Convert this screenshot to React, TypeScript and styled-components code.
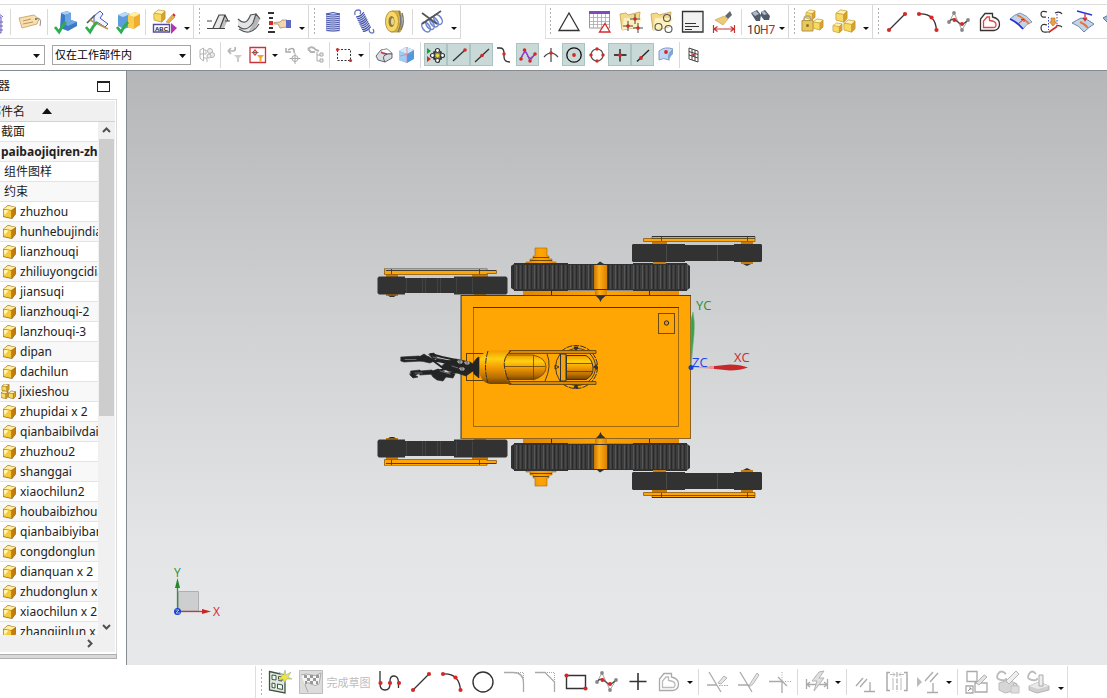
import React from "react";
import styled, { createGlobalStyle, css } from "styled-components";

const Global = createGlobalStyle`
  * { box-sizing: border-box; }
  body { margin: 0; background: #fff; color: #222; font-family: "Noto Sans", "Noto Sans CJK SC", sans-serif; font-size: 12px; overflow: hidden; }
  button, select { font: inherit; color: inherit; }
`;

const Shell = styled.div`
  display: flex;
  flex-direction: column;
  height: 100vh;
  overflow: hidden;
`;

const ToolbarRow = styled.header`
  display: flex;
  flex: none;
  height: 35px;
  margin-top: 4px;
  border-top: 1px solid #dcdcdc;
  overflow: hidden;
`;

const Group = styled.div<{ $gapBefore?: boolean }>`
  display: flex;
  flex: none;
  align-items: center;
  border-right: 1px solid #d8d8d8;
  border-bottom: 1px solid #dcdcdc;
  ${(p) => p.$gapBefore && css`margin-left: 84px; box-shadow: inset 1px 0 #e2e2e2;`}
`;

const Grip = styled.span`
  flex: none;
  width: 8px;
  height: 27px;
  padding: 0 2px;
  background: repeating-linear-gradient(#b0b0b0 0 2px, transparent 2px 4px) content-box 3px 0 / 3px 100% no-repeat;
`;

const Sep = styled.span<{ $tight?: boolean }>`
  flex: none;
  width: 1px;
  height: 26px;
  margin: 0 ${(p) => (p.$tight ? "2px" : "3px")} 0 2px;
  background: #d9d9d9;
`;

const ToolButton = styled.button<{ $clipped?: boolean; $wide?: boolean }>`
  display: flex;
  flex: none;
  align-items: center;
  justify-content: ${(p) => (p.$clipped ? "flex-end" : "center")};
  gap: 4px;
  width: ${(p) => (p.$clipped ? "8px" : p.$wide ? "79px" : "31px")};
  height: 31px;
  padding: ${(p) => (p.$clipped ? "0 4px 0 0" : "0")};
  border: 0;
  background: none;
  color: #bdbdbd;
  font-size: 11px;
  white-space: nowrap;
  svg { flex: none; overflow: visible; }
`;

const CaretButton = styled.button<{ $low?: boolean }>`
  flex: none;
  width: ${(p) => (p.$low ? "13px" : "12px")};
  height: 24px;
  padding: ${(p) => (p.$low ? "12px 0 0" : "0")};
  border: 0;
  background: none;
  line-height: 0;
`;

const OptionsRow = styled.div`
  display: flex;
  flex: none;
  align-items: center;
  height: 32px;
  border-bottom: 1px solid #858b90;
`;

const SelectBox = styled.label<{ $short?: boolean }>`
  position: relative;
  flex: none;
  display: flex;
  width: ${(p) => (p.$short ? "45px" : "139px")};
  height: 20px;
  margin-right: ${(p) => (p.$short ? "7px" : "4px")};
  svg { position: absolute; right: 5px; top: 9px; pointer-events: none; }
`;

const Select = styled.select<{ $short?: boolean }>`
  width: 100%;
  height: 20px;
  padding: 0 2px;
  border: 1px solid #a5a5a5;
  ${(p) => p.$short && "border-left: 0;"}
  border-radius: 0;
  appearance: none;
  background: #fff;
  color: #000;
  font-size: 11px;
`;

const SnapButton = styled.button<{ $on?: boolean }>`
  display: flex;
  flex: none;
  align-items: center;
  justify-content: center;
  width: 23px;
  height: 23px;
  padding: 0;
  border: 1px solid ${(p) => (p.$on ? "#a9c5c1" : "transparent")};
  background: ${(p) => (p.$on ? "#c8d9d7" : "transparent")};
`;

const Main = styled.div`
  display: flex;
  flex: 1;
  min-height: 0;
`;

const Navigator = styled.aside`
  display: flex;
  flex: none;
  flex-direction: column;
  width: 127px;
  padding: 0 9px 6px 0;
  border-right: 1px solid #858b90;
  overflow: hidden;
`;

const NavTitle = styled.div`
  display: flex;
  flex: none;
  align-items: center;
  justify-content: space-between;
  height: 28px;
  padding-right: 7px;
  span { margin-left: -2px; }
`;

const MaxButton = styled.button`
  width: 13px;
  height: 11px;
  margin-top: 3px;
  padding: 0;
  border: 1px solid #222;
  border-top-width: 2px;
  background: none;
`;

const TreeFrame = styled.div`
  display: flex;
  flex: 1;
  flex-direction: column;
  min-height: 0;
  border: solid #d9d9d9;
  border-width: 1px 1px 0 0;
  padding: 1px 1px 2px 0;
`;

const ColumnHeader = styled.button`
  display: flex;
  flex: none;
  align-items: center;
  gap: 17px;
  height: 21px;
  padding: 0;
  border: 0;
  border-bottom: 1px solid #d2d2d2;
  background: #f0f0f0;
  white-space: nowrap;
  span { margin-left: -11px; }
`;

const TreeBody = styled.div`
  display: flex;
  flex: 1;
  min-height: 0;
`;

const TreeList = styled.ul`
  flex: 1;
  min-width: 0;
  margin: 0;
  padding: 0;
  list-style: none;
  overflow: hidden;
`;

const TreeItem = styled.li<{ $kind: string }>`
  display: flex;
  align-items: center;
  gap: ${(p) => (p.$kind === "assembly" ? "3px" : "4px")};
  height: 20px;
  padding-left: ${(p) => ({ part: "3px", indent: "4px" }[p.$kind] || "1px")};
  border-bottom: 1px solid #e4e4e4;
  font-weight: ${(p) => (p.$kind === "root" ? 700 : 400)};
  line-height: 19px;
  white-space: nowrap;
  &:nth-child(even) { background: #f8f8f8; }
  svg { flex: none; }
`;

const VScroll = styled.div`
  display: flex;
  flex: none;
  flex-direction: column;
  align-items: center;
  width: 17px;
  background: #f0f0f0;
`;

const ScrollArrow = styled.button`
  flex: none;
  width: 16px;
  height: 17px;
  padding: 0;
  border: 0;
  background: none;
  line-height: 0;
`;

const Thumb = styled.div`
  width: 15px;
  height: 54%;
  margin-bottom: auto;
  background: #cdcdcd;
`;

const HScroll = styled.div`
  display: flex;
  flex: none;
  align-items: center;
  justify-content: flex-end;
  height: 17px;
  padding-right: 18px;
  background: #f0f0f0;
`;

const Splitter = styled.div`
  flex: none;
  height: 5px;
  border: 1px solid #b0b0b0;
  border-left: 0;
  background: #d9d9d9;
`;

const Viewport = styled.main`
  position: relative;
  flex: 1;
  min-width: 0;
  background: linear-gradient(#b5b6b8, #d0d1d3 42%, #e4e5e7 80%, #e7e8ea);
`;

const Scene = styled.svg`
  display: block;
  width: 100%;
  height: 100%;
`;

const Triad = styled.svg`
  position: absolute;
  left: 41px;
  bottom: 42px;
`;

const BottomRow = styled.footer`
  display: flex;
  flex: none;
  height: 33px;
  padding: 1px 0 0 255px;
  background: #fff;
`;

const BottomGroup = styled.div`
  display: flex;
  align-items: center;
  border: solid #dedede;
  border-width: 0 1px 0 1px;
`;

const Caret = () => (
  <svg width="7" height="4"><path d="M0 0H7L3.5 4Z" fill="#111" /></svg>
);

const Dot = ({ x, y, r = 2.1, c = "#d32a28" }: { x: number; y: number; r?: number; c?: string }) => (
  <circle cx={x} cy={y} r={r} fill={c} stroke="none" />
);

const K = "#333";
const G = "#b4b4b4";
const R = "#d32a28";

const check = <path d="M1 17 5 22Q8 16 12 12" fill="none" stroke="#2fae4b" strokeWidth="2.8" />;

const cube = (x: number, y: number, s: number, id: string, edge = "#c09a3a") => (
  <g key={id} transform={`translate(${x} ${y}) scale(${s})`} stroke={edge} strokeWidth=".5" strokeLinejoin="round">
    <path d="M0 3 4 0 10 1 10 8 7 11 0 9Z" fill="#f2b829" />
    <path d="M0 3 4 0 10 1 7 4Z" fill="#fff3b4" />
    <path d="M0 3 7 4 7 11 0 9Z" fill="#f8d963" />
    <path d="M7 4 10 1 10 8 7 11Z" fill="#d9a02c" />
  </g>
);

const lineIcon = <><path d="M4 20 20 4" stroke={K} strokeWidth="1.3" /><Dot x={4} y={20} /><Dot x={20} y={4} /></>;
const arcIcon = <><path d="M3 4Q19 3 20.5 20" fill="none" stroke={K} strokeWidth="1.3" /><Dot x={3} y={4} /><Dot x={15.5} y={7.5} /><Dot x={20.5} y={20} /></>;
const splineIcon = (
  <>
    <path d="M2 12 7 3 15 20 21 10" fill="none" stroke="#999" strokeWidth=".9" />
    <path d="M2 12C5 8 7 9 9 10.5S14 15 16 14 20 11 21 10" fill="none" stroke="#444" strokeWidth="1.2" />
    <Dot x={2} y={12} c="#888" r={1.9} /><Dot x={7} y={3} c="#888" r={1.9} /><Dot x={15} y={20} c="#888" r={1.9} /><Dot x={21} y={10} c="#888" r={1.9} />
    <Dot x={7.500} y={10} /><Dot x={15} y={14} />
  </>
);
const offsetShape = (outer: string, inner: string) => (
  <g fill="none" strokeWidth="1.3">
    <path d="M2.500 20.500V9L7 3.500H14.500V7Q21.500 8.500 21.500 14T16 20.500Z" stroke={outer} />
    <path d="M5.500 17.500V11L9 7H11.500V10.500Q18 11 18 14.500T15 17.500Z" stroke={inner} />
  </g>
);

const art: Record<string, React.ReactNode> = {
  notes: <><path d="M4 7H21V23H4Z" fill="#eceaff" stroke="#6b5fc0" /><path d="M18 3 23 7M7 12H23M7 16H23M7 20H23" stroke="#6b5fc0" /></>,
  tag: <><path d="M1 8 16 5 21 9 19 14 4 18Z" fill="#f6dfb0" stroke="#c99a55" strokeWidth=".8" /><path d="M5 11 13 9M5 14 15 12" stroke="#b58c54" strokeWidth=".9" /><circle cx="18" cy="9" r="1" fill="#7a5a30" /><path d="M18 9Q24 6 22 16" fill="none" stroke="#888" /></>,
  blockCheck: <><path d="M7 3 13 1 17 3V10L23 12V16L14 21 6 18Z" fill="#3d79c9" /><path d="M7 3 13 1 17 3 11 5Z" fill="#a8cdf4" /><path d="M11 5 17 3V10L23 12 14 16 11 14Z" fill="#6ea6e4" />{check}</>,
  sketchCheck: <><path d="M9 6 15 1 18 4 15 8 23 14 20 17 12 12 9 14Z" fill="#f2f5ff" stroke="#3d56c5" /><path d="M2 13 10 5" fill="none" stroke="#555" strokeWidth="1.6" /><path d="M5 10 23 19" stroke="#b99a58" strokeWidth="1.8" />{check}</>,
  boxCheck: <><path d="M2 5 9 2 14 4V17L8 19 2 16Z" fill="#5e9ddd" /><path d="M2 5 9 2 14 4 7 7Z" fill="#b9daf7" /><path d="M12 5 19 2 24 4V15L18 19 12 17Z" fill="#f0ad32" /><path d="M12 5 19 2 24 4 18 7Z" fill="#fff0a3" /><path d="M12 5 18 7V19L12 17Z" fill="#f9cd50" />{check}</>,
  abc: <>{cube(1, 0, 1.1, "a")}<path d="M13 12 19 5 22 7 16 13Z" fill="#e8b43d" stroke="#a98" strokeWidth=".7" /><path d="M20 4 22 6" stroke={R} strokeWidth="2" /><path d="M.500 14.500H16.500V22H.500Z" fill="#fff" stroke="#5749a2" strokeWidth="1.4" /><text x="2" y="21" fontSize="6" fontWeight="700" fontFamily="Liberation Sans" fill="#222">ABC</text><path d="M18 13 24 18 18 24Z" fill="#b138ad" /></>,
  slot: <><path d="M7 18 13 5H19L14 18Z" fill="#e6e7e8" /><path d="M14 18 19 5 21 12 18 18Z" fill="#bfc1c3" /><path d="M1 11H6M19 11H24M1 18.500H19M7 18 13 5H19L14 18M19 5 22 11" fill="none" stroke="#444" strokeWidth="1.200" /></>,
  groove: <><path d="M1 9Q9 17 14 5L19 4Q16 20 10 21 4 21 1 16Z" fill="#e3e4e5" /><path d="M19 4 23 9Q19 20 11 22 17 15 19 4Z" fill="#b5b7b9" /><path d="M1 9Q9 17 13.500 5L19 4 23 9M1 16Q9 23 16 13L19 4M2 19Q14 27 22 14" fill="none" stroke="#555" strokeWidth="1.200" /></>,
  feature: <><path d="M0 3H6M1 8H5M1 18H5M0 22H7" stroke={K} strokeWidth="1.8" /><path d="M1 11H5V15H1Z" fill={R} /><path d="M6 12.500 12 12 14 10H19V17L12 18 10 14H6Z" fill="#f0d5ae" stroke="#a98f70" strokeWidth=".8" /><path d="M18 10H23V18H18Z" fill="#5f68c0" /></>,
  spring: <><rect x="5" y="3" width="14" height="19" rx="2" fill="#dfe2f6" />{[3, 5, 7, 9, 11, 13, 15, 17, 19].map((y) => <path key={y} d={`M5 ${y + 1}Q12 ${y + 3} 19 ${y + 1}`} fill="none" stroke="#4553a8" strokeWidth="1.1" />)}<path d="M5 4Q12 1 19 4" fill="none" stroke="#4553a8" /></>,
  extSpring: <><g transform="rotate(-25 12 12)"><rect x="7" y="4" width="9" height="16" fill="#d7dbf3" />{[4, 6, 8, 10, 12, 14, 16, 18, 20].map((y) => <path key={y} d={`M7 ${y}Q11 ${y + 2} 16 ${y - 1}`} fill="none" stroke="#4452a3" strokeWidth="1.1" />)}</g><path d="M3 5Q2 0 6 0T8 4M17 19Q17 23 20 23T21 19" fill="none" stroke="#6874bd" strokeWidth="1.3" /></>,
  spool: <><path d="M9 1H17Q21 12 17 22H8Z" fill="#ddb43d" stroke="#a98b2c" strokeWidth=".8" /><path d="M16 1Q20 12 15 22M19 3Q22 12 18 20" fill="none" stroke="#777" strokeWidth="1.4" /><ellipse cx="9" cy="11.500" rx="6.500" ry="10.500" fill="#f7d766" stroke="#b59634" /><ellipse cx="8.500" cy="11.500" rx="3" ry="5.500" fill="#8f7c45" /><ellipse cx="9.500" cy="11.500" rx="1.500" ry="3.500" fill="#e9d58c" /></>,
  springCut: <><g fill="none" stroke="#6c84d0" strokeWidth="1.500"><ellipse cx="6" cy="17" rx="3.500" ry="5.500" transform="rotate(-35 6 17)" /><ellipse cx="10" cy="14.500" rx="3.500" ry="5.500" transform="rotate(-35 10 14.500)" /><ellipse cx="14" cy="12" rx="3.500" ry="5.500" transform="rotate(-35 14 12)" /><ellipse cx="18" cy="9.500" rx="3.500" ry="5.500" transform="rotate(-35 18 9.500)" /></g><path d="M2 3 17 14M21 1 2 14" stroke="#555" strokeWidth="1.700" /></>,
  triangle: <path d="M12 3 22 20.500H2Z" fill="none" stroke={K} strokeWidth="1.3" />,
  tableTri: <><path d="M1.500 2H21.500V18H1.500Z" fill="#fff" stroke="#999" /><path d="M1 1H22V4H1Z" fill="#7c4bc4" /><path d="M2 7.500H21M2 11.500H21M2 14.500H21M5.500 4V18M9.500 4V18M13.500 4V18M17.500 4V18" stroke="#aaa" strokeWidth=".8" /><path d="M17 13.500 22 22H11.500Z" fill="#fff" stroke={R} strokeWidth="1.300" /></>,
  folderPts: <><path d="M1 4 7 3 9 5 21 2 19 17 3 20Z" fill="#f4d98a" stroke="#cfae60" /><path d="M5 8H23L19 17 3 20Z" fill="#fbf0be" /><path d="M16 4V14M11 9H21M9 11V21M4 16H14M19 13V23M14 18H24" stroke={K} strokeWidth=".9" /><Dot x={16} y={9} r={1.800} /><Dot x={9} y={16} r={1.800} /><Dot x={19} y={18} r={1.800} /></>,
  folderCircles: <><path d="M1 4 7 3 9 5 21 2 19 17 3 20Z" fill="#f4d98a" stroke="#cfae60" /><path d="M5 8H23L19 17 3 20Z" fill="#fbf0be" /><g fill="none" stroke="#555" strokeWidth="1.1"><circle cx="17" cy="8" r="3.500" /><circle cx="8.500" cy="17" r="3.500" /><circle cx="18.500" cy="19" r="3.500" /></g></>,
  terminal: <><path d="M1.500 1.500H22V22H1.500Z" fill="#f1f1f1" stroke={K} strokeWidth="1.300" /><path d="M4 13.500H15M4 16.500H18M4 19.500H11" stroke={K} strokeWidth="1.2" /></>,
  brush: <><path d="M13 6 18 1 20 5 16 9Z" fill="#606873" /><path d="M3 10 12 6 16 9 11 15Z" fill="#eccb77" stroke="#c5a460" strokeWidth=".7" /><path d="M1.500 15V23M22.500 15V23M2 19H22M5.500 16.500 2 19 5.500 21.500M18.500 16.500 22 19 18.500 21.500" fill="none" stroke="#c83336" strokeWidth="1.2" /></>,
  find: <><path d="M3 3 9 0 13 5 12 11 8 11ZM13 2 17 0 22 6 21 10 16 10 13 6Z" fill="#4f5a6c" /><path d="M4 3 8 1 11 4 7 6ZM13 2 16 1 19 4 16 5Z" fill="#aeb8c8" /><text x="-1" y="24" fontSize="12" fontFamily="Roboto" fill="#333">10</text><text x="12" y="24" fontSize="12" fontFamily="Roboto" fill="#a62e2e">H7</text></>,
  lockCubes: <>{cube(5, 0, 0.9, "a")}{cube(12, 9, 1, "b")}<path d="M1 10.500H12V21H1Z" fill="#e9c85a" stroke="#b39344" /><path d="M3 10.500Q3 6 6.500 6T10 10.500" fill="none" stroke="#b8ac80" strokeWidth="1.800" /><Dot x={6.500} y={15.500} c="#8d702b" r={1.500} /></>,
  cubes: <>{cube(4, 0, 1.1, "a")}{cube(12, 10, 1.1, "b")}{cube(1, 13, 0.9, "c")}</>,
  line: lineIcon,
  arc: arcIcon,
  spline: splineIcon,
  offset: offsetShape(K, "#e04848"),
  surface1: <><path d="M1 9Q6 4 11 3 18 5 23 12 18 13 14 19 8 12 1 9Z" fill="#c1d4ea" stroke="#6c84a8" strokeWidth=".8" /><path d="M1 9Q8 12 14 19" fill="none" stroke="#2434d9" strokeWidth="1.900" /><path d="M8 5Q15 8 20 14" fill="none" stroke="#e87636" strokeWidth="1.900" /><path d="M9 14 15 9M12 9.500H15V12" fill="none" stroke={R} /></>,
  project: <><path d="M7 2Q1 0 1 4T6 7M7 15Q1 13 1 18T7 22H10M16 16Q20 15 22 17M15 3Q20 1 22 4" fill="none" stroke={K} strokeWidth="1.200" /><path d="M9 22 17 16.500" stroke={R} strokeWidth="1.6" /><path d="M8.500 7V20M17 4V16" stroke="#3542df" strokeDasharray="1.500 1.500" /><path d="M11 8H15V12H16.500L13 16 9.500 12H11Z" fill="#eda146" stroke="#ad6b25" strokeWidth=".6" /></>,
  surface2: <><path d="M1 13Q6 10 10 8 17 9 23 14 18 17 13 22 8 15 1 13Z" fill="#c1d4ea" stroke="#6c84a8" /><path d="M6 1 21 5" stroke="#2636e1" strokeWidth="1.500" /><path d="M9 12Q14 14 17 18" fill="none" stroke="#e87636" strokeWidth="1.900" /><path d="M14 3.500V10M12 7.500 14 10.500 16 7.500" fill="none" stroke={R} strokeWidth="1.300" /></>,
  surface3: <path d="M1 8 10 3 23 12 12 19Z" fill="#9fb8dc" stroke="#667a9b" />,
  sketchNew: <><path d="M1.500 1.500 17 5V23L1.500 20Z" fill="#e0ebdd" stroke="#405445" strokeWidth="1.300" /><path d="M4 5 8 5.500V10L4 9.500ZM10.500 6.500 14 7V11L10.500 10.500ZM4 13 7 13.500V18L4 17.500ZM9.500 14 14.500 15V19.500L9.500 18.500Z" fill="#f5faf4" stroke="#405445" /><path d="M17 0 18 5 23 2 20 7 24 9 18.500 9 17 13 15 9 10 10 14 6 11 2 15.500 5Z" fill="#f4e33f" stroke="#8ab0c0" strokeWidth=".6" /></>,
  flag: <><path d="M.5.500H23.500V23.500H.500Z" fill="#dcdcdc" stroke="#bdbdbd" /><path d="M2 5Q8 3 12 5T22 3L20 14Q16 17 12 14T6 15L9 22" fill="#f6f6f6" stroke="#aaa" /><path d="M5 5H8V8H5ZM11 5H14V8H11ZM17 5H20V8H17ZM8 8H11V11H8ZM14 8H17V11H14ZM6 11H8V14H6ZM11 11H14V14H11ZM17 11H19V14H17Z" fill="#999" /></>,
  profile: <><path d="M2 1V14Q2 20 7 20T12 14V11Q12 6 16 6T20.500 12V18" fill="none" stroke={K} strokeWidth="1.300" /><Dot x={2.500} y={13} /><Dot x={12} y={13} /><Dot x={21} y={13} /></>,
  circle: <circle cx="12" cy="12" r="10" fill="none" stroke={K} strokeWidth="1.400" />,
  fillet: <><path d="M2 2.500H11Q21.500 2.500 21.500 13V22" fill="none" stroke="#aaa" strokeWidth="1.300" /><path d="M12 2.500H21.500V12" fill="none" stroke="#aaa" strokeDasharray="1 1" /></>,
  chamfer: <><path d="M2 2.500H12L21.500 12V22" fill="none" stroke="#aaa" strokeWidth="1.300" /><path d="M12 2.500H21.500V12" fill="none" stroke="#aaa" strokeDasharray="1 1" /></>,
  rect: <><path d="M2.500 5.500H21.500V18.500H2.500Z" fill="none" stroke={K} strokeWidth="1.400" /><Dot x={2.500} y={5.500} /><Dot x={21.500} y={18.500} /></>,
  plus: <path d="M12 3V20M3.500 11.500H20.500" stroke={K} strokeWidth="1.600" />,
  offsetGray: offsetShape("#aaa", "#bbb"),
  trim: <><path d="M3 2 15 22M1 15H11" stroke="#aaa" strokeWidth="1.300" /><path d="M13 15.500H22" stroke="#aaa" strokeDasharray="1.500 1" /><path d="M12 13 18 6 21 8 15 14Z" fill="#e6e6e6" stroke={G} /></>,
  extend: <><path d="M3 2 15 22M1 15H12" fill="none" stroke="#aaa" strokeWidth="1.300" /><path d="M13 14 20 3 22 5 16 14 12 17Z" fill="#e6e6e6" stroke={G} /></>,
  corner: <><path d="M1 11.500H14V23M10 7 19 16" fill="none" stroke="#aaa" strokeWidth="1.300" /><path d="M14 2V11.500H23" fill="none" stroke="#aaa" strokeDasharray="1 1.500" /></>,
  autoDim: <><path d="M1.500 9V19M22.500 9V19M2 14.500H22M5 12 2 14.500 5 17M19 12 22 14.500 19 17" fill="none" stroke="#aaa" strokeWidth="1.300" /><path d="M14 2 7 11H12L9 21 19 8H14L19 1Z" fill="#e0e0e0" stroke="#b4b4b4" /></>,
  constraint: <><path d="M2 16 9 8M6 17 13 9M16 12V21M10 21.500H21" stroke="#aaa" strokeWidth="1.300" /></>,
  symmetric: <><path d="M5 2.500H2V20.500H5M19 2.500H22V20.500H19" fill="none" stroke="#aaa" strokeWidth="1.500" /><path d="M12 2V22" stroke="#999" strokeDasharray="5 1.500" /><path d="M5 4.500H10M19 4.500H14M8 2.500 10 4.500 8 6.500M16 2.500 14 4.500 16 6.500M8 8V20M16 8V20" fill="none" stroke="#bbb" /></>,
  showCons: <><path d="M1 7 6 12 1 17Z" fill="#bbb" /><path d="M9 11 17 2M14 12 22 3M17 13V23M11 22.500H22" stroke="#aaa" strokeWidth="1.300" /></>,
  refSketch: <><path d="M2 1.500H12V11.500H2ZM10 13H22V22H10ZM1 16H8V23H1Z" fill="#fff" stroke="#aaa" strokeWidth="1.300" /><path d="M3 21 6 18M4 18H6V20" fill="none" stroke="#999" /><path d="M11 13 19 5 22 7 14 15Z" fill="#e2e2e2" stroke={G} /></>,
  editFeat: <><path d="M10 4Q5-1 2 4T5 10 10 8" fill="none" stroke="#bbb" strokeWidth="1.800" /><path d="M3 13 13 10 21 14V20L9 23 3 20Z" fill="#d6d6d6" stroke="#bbb" /><path d="M10 11 20 1 23 4 13 14Z" fill="#eee" stroke={G} /><path d="M15 16H23V23H15Z" fill="#ddd" stroke="#c4c4c4" /><path d="M17 16Q17 13 19 13T21 16" fill="none" stroke="#bbb" /></>,
  rollFeat: <><path d="M9 4Q5-1 2 4T5 10 10 8" fill="none" stroke="#bbb" strokeWidth="1.800" /><path d="M2 16 12 12 22 16V20L10 23 2 20Z" fill="#cfcfcf" stroke="#b4b4b4" /><path d="M2 16 12 12 22 16 11 19Z" fill="#e8e8e8" /><path d="M12 5H16V16H12Z" fill="#eee" stroke="#aaa" /></>,
};

const snapArt: Record<string, React.ReactNode> = {
  asm: <g stroke={G} fill="none"><path d="M2 4 5.500 2V15L2 12ZM2 8H8V4H5M5 12H9V16" /><circle cx="12" cy="5" r="2.500" fill="#eee" /><circle cx="14" cy="9" r="2.500" fill="#eee" /><circle cx="11" cy="10" r="2" fill="#eee" /></g>,
  undoFilter: <><path d="M2 5H7Q10 5 9 1M2 5 5 2M2 5 5 8" fill="none" stroke={G} strokeWidth="1.700" /><path d="M8 9H16L13 12V16H11V12Z" fill="#ccc" /></>,
  filter: <><path d="M1 1.500H16.500V16.500H1Z" fill="#fff" stroke="#c9343c" strokeWidth="1.300" /><path d="M6 3V10M2.500 6.500H9.500" stroke="#555" strokeWidth=".8" /><circle cx="6" cy="6.500" r="2" fill="none" stroke={R} /><path d="M8 9H15L12.500 12V15.500H10.500V12Z" fill="#efa52e" /></>,
  rotate: <><path d="M4 4Q11 0 10 7M2 2V6H7" fill="none" stroke="#aaa" strokeWidth="1.500" /><path d="M11 7V18M5.500 12.500H16.500" stroke="#aaa" /><circle cx="11" cy="12.500" r="3" fill="none" stroke="#aaa" /></>,
  tree: <><path d="M1 3Q5-1 9 4L12 5M3 6H8M1 3 4 6" fill="none" stroke={G} strokeWidth="2" /><path d="M10 6V15H13M10 9H13" fill="none" stroke="#aaa" /><path d="M13 7H16V10H13ZM13 13H16V16H13Z" fill="#eee" stroke="#aaa" /></>,
  marquee: <><path d="M2.500 3.500H15.500V14.500H2.500Z" fill="none" stroke={K} strokeDasharray="2 1.500" /><Dot x={2.500} y={3.500} r={1.600} /><Dot x={15.500} y={14.500} r={1.600} /></>,
  solid: <><path d="M1 10 6 4 12 3 17 7V12L10 16 3 14Z" fill="#d9dce0" stroke="#667" /><path d="M6 4 12 3 17 7 9 9Z" fill="#fff" stroke="#889" strokeWidth=".6" /><path d="M6 6.500 12 8" stroke={R} strokeWidth="1.300" /><path d="M10 16Q7 11 10 9T17 8" fill="none" stroke="#556" /></>,
  blueCube: <><path d="M1 5 8 1 16 4V13L9 17 1 14Z" fill="#4d9ae4" /><path d="M1 5 8 1 16 4 9 8Z" fill="#d4e8fa" /><path d="M1 5 9 8V17L1 14Z" fill="#9fcdf5" /><path d="M9 1V17M2 10 15 7" stroke="#e07785" strokeWidth=".7" /></>,
  snapAll: <><path d="M0 2 4 5 0 8Z" fill="#1c9d38" /><path d="M0 10 4 13 0 16Z" fill={R} /><g stroke={K} strokeWidth="1.200" fill="#fff"><circle cx="10.500" cy="4.500" r="2" /><circle cx="10.500" cy="14.500" r="2" /><circle cx="5.500" cy="9.500" r="2" /><circle cx="15.500" cy="9.500" r="2" /></g><circle cx="10.500" cy="9.500" r="2.200" fill="#f3df22" stroke="#777" /><path d="M6.500 5.500 8.500 7.500M14.500 5.500 12.500 7.500M6.500 13.500 8.500 11.500M14.500 13.500 12.500 11.500" stroke={K} strokeWidth="2" /></>,
  end: <><path d="M3 15 15 4" stroke={K} strokeWidth="1.300" /><Dot x={15} y={4} r={1.800} /></>,
  mid: <><path d="M2 16 16 3" stroke={K} strokeWidth="1.300" /><Dot x={9} y={9.500} r={1.800} /></>,
  ctrl: <><path d="M1 2H4Q8 2 8 7V11Q8 16 14 16" fill="none" stroke={K} strokeWidth="1.300" /><Dot x={8} y={8} r={1.700} /></>,
  pole: <><path d="M2 13 6 4 11 15 16 8" fill="none" stroke={K} strokeWidth=".8" /><path d="M2 12Q6 3 8 8T12 12 16 8" fill="none" stroke="#9a3bd3" strokeWidth="1.500" /><Dot x={2} y={13} r={1.800} /><Dot x={5.500} y={4} r={1.800} /><Dot x={11} y={15} r={1.800} /><Dot x={16} y={8} r={1.800} /></>,
  cross: <><path d="M2 11Q9 3 16 11M9 2V16" fill="none" stroke="#444" strokeWidth="1.200" /><Dot x={9} y={7} r={1.800} /></>,
  center: <><circle cx="9" cy="9" r="7.200" fill="none" stroke="#111" strokeWidth="1.300" /><Dot x={9} y={9} r={1.900} /></>,
  quad: <><circle cx="9" cy="9" r="6" fill="none" stroke="#555" strokeWidth="1.200" /><Dot x={9} y={3} r={1.700} /><Dot x={9} y={15} r={1.700} /><Dot x={3} y={9} r={1.700} /><Dot x={15} y={9} r={1.700} /></>,
  point: <><path d="M9 3V15.500M3 9H15.500" stroke="#111" strokeWidth="1.300" /><Dot x={9} y={9} r={1.900} /></>,
  onCurve: <><path d="M3 15.500 15 4" stroke="#222" strokeWidth="1.300" /><Dot x={7} y={12} r={1.900} /></>,
  face: <><path d="M2 5Q8 0 16 3Q10 8 12 14Q6 11 2 14Z" fill="#bdd8f6" stroke="#7892b8" strokeWidth=".9" /><path d="M12 14Q10 8 16 3V8Q12 11 12 17Z" fill="#7fa6da" /><Dot x={9} y={6} r={1.900} /></>,
  grid: <><path d="M4 2 13 5V16L4 13ZM4 5.500 13 8.500M4 9 13 12M7 3V14M10 4V15" fill="none" stroke={K} strokeWidth=".9" /><Dot x={8.500} y={9} r={1.300} /></>,
};

const Tool = ({ name, clipped }: { name: string; clipped?: boolean }) => (
  <ToolButton aria-label={name} $clipped={clipped}>
    <svg width="24" height="24" viewBox="0 0 24 24">{art[name]}</svg>
  </ToolButton>
);
const Drop = ({ low }: { low?: boolean }) => (
  <CaretButton $low={low} aria-label="more"><svg width="6" height="3"><path d="M0 0H6L3 3Z" fill="#111" /></svg></CaretButton>
);
const Snap = ({ name, on }: { name: string; on?: boolean }) => (
  <SnapButton aria-label={name} aria-pressed={!!on} $on={on}>
    <svg width="18" height="18" viewBox="0 0 18 18">{snapArt[name]}</svg>
  </SnapButton>
);
const tools = (names: string) => names.split(" ").map((n) => <Tool key={n} name={n} />);

const PartIcon = () => (
  <svg width="13" height="14" viewBox="0 0 13 14">
    <path d="M0 4 5 0 13 2V9L9 14 0 12Z" fill="#a56d10" />
    <path d="M.500 4 5 .800 12.500 2.300 8.500 5Z" fill="#fff0a0" />
    <path d="M.500 4.500 8.300 5.500V13L.500 11.300Z" fill="#f8cb3c" />
    <path d="M1 5 5.500 5.600 1.500 10Z" fill="#fff8cc" />
    <path d="M9 5.600 12.700 3V8.700L9 13Z" fill="#c47d0c" />
  </svg>
);
const AssemblyIcon = () => (
  <svg width="15" height="15" viewBox="0 0 15 15">
    {cube(1, 0, 0.7, "a", "#7d5408")}{cube(0, 7, 0.7, "b", "#7d5408")}{cube(7.5, 7, 0.7, "c", "#7d5408")}
  </svg>
);

const rows: [string, string][] = [
  ["截面", "plain"], ["paibaojiqiren-zhuang", "root"], ["组件图样", "indent"], ["约束", "indent"],
  ["zhuzhou", "part"], ["hunhebujindianji", "part"], ["lianzhouqi", "part"], ["zhiliuyongcidianji", "part"],
  ["jiansuqi", "part"], ["lianzhouqi-2", "part"], ["lanzhouqi-3", "part"], ["dipan", "part"],
  ["dachilun", "part"], ["jixieshou", "assembly"], ["zhupidai x 2", "part"], ["qianbaibilvdai", "part"],
  ["zhuzhou2", "part"], ["shanggai", "part"], ["xiaochilun2", "part"], ["houbaibizhou", "part"],
  ["qianbaibiyiban", "part"], ["congdonglun", "part"], ["dianquan x 2", "part"], ["zhudonglun x 2", "part"],
  ["xiaochilun x 2", "part"], ["zhangjinlun x 2", "part"],
];

const O = "#ffa504";
const D = "#323232";

const RobotSide = () => (
  <g>
    <path d="M523 290H679V296H523Z" fill="url(#axle)" />
    <path d="M551.500 290V296M649.500 290V296" stroke={D} />
    <path d="M535 248H547V256H549V259H552V262H556V264H526V262H530V259H533V256H535Z" fill="url(#axle)" stroke="#a76a05" strokeWidth=".6" />
    <path d="M533 257.500H549M530 260.500H552M526 263.500H556" stroke="#714809" />
    <path d="M514 263H568V264H633V263H687V264L690 266V288L687 290V291H633V290H568V291H514V290L511 288V266L514 264Z" fill={D} />
    <rect x="513" y="265" width="175" height="24" fill="url(#tread)" />
    <path d="M568 290.500H633" stroke="#888" />
    <rect x="594" y="264" width="13" height="26" fill="url(#axleH)" />
    <rect x="595" y="290" width="12" height="6" fill="url(#axleH)" />
    <path d="M593.500 264.500H607.500M593.500 289.500H607.500" stroke={D} />
    <path d="M597 264 600 261.500 604 264Z" fill={D} />

    <path d="M386 274H398V277H386ZM472 274H488V277H472ZM386 294H398V296H386ZM474 294H486V295H474Z" fill="#c77a05" />
    <path d="M388 295.500H396L394 297H390Z" fill={D} />
    <path d="M384.500 268.500H487V270.500H496.500V273.500H487V274.500H384.500Z" fill={O} stroke="#8a5a10" strokeWidth=".8" />
    <path d="M385 268.500H487" stroke="#8d8d8d" /><path d="M386 270.500H496" stroke={D} strokeWidth=".9" />
    <path d="M391.500 269V274M479.500 269V274" stroke={D} strokeWidth=".8" />
    <path d="M379 276.500H405V278H454V276.500H506L507.500 278V293L506 294.500H454V293H405V294.500H379L377.500 293V278Z" fill={D} />
    <path d="M406.500 278V293M422.500 278V293M425.500 278V293M437.500 278V293M440.500 278V293M456.500 278V293M472.500 278V293" stroke="#434343" />

    <path d="M652 241H667V244H652ZM741 241H753V244H741ZM653 262H666V264H653ZM741 262H753V264H741Z" fill="#c77a05" />
    <path d="M743 264H751L747 266Z" fill={D} />
    <path d="M643.500 238.500H652V236.500H755V241.500H643.500Z" fill={O} stroke="#8a5a10" strokeWidth=".8" />
    <path d="M652 236.500H755" stroke={D} /><path d="M652 238.500H755" stroke={D} strokeWidth=".7" />
    <path d="M661.500 237V241M747.500 237V241" stroke={D} strokeWidth=".8" />
    <path d="M633 244H685V245H734V244H761L762 245V261L761 262H734V261H685V262H633L632 261V245Z" fill={D} />
    <path d="M666.500 245V261M717.500 245V261" stroke="#4a4a4a" />
  </g>
);

const Robot = () => (
  <Scene viewBox="127 71 980 594" role="img" aria-label="robot model">
    <defs>
      <pattern id="tread" width="9" height="24" x="513" patternUnits="userSpaceOnUse">
        <rect width="9" height="24" fill="#3d3d3d" />
        <path d="M.500 0V24M5.500 0V24" stroke="#2a2a2a" />
        <path d="M3.500 0V24" stroke="#575757" />
        <path d="M7.500 0V24" stroke="#4a4a4a" />
      </pattern>
      <linearGradient id="axle"><stop offset="0" stopColor="#e08700" /><stop offset=".5" stopColor={O} /><stop offset="1" stopColor="#e88d00" /></linearGradient>
      <linearGradient id="axleH"><stop offset="0" stopColor="#c97700" /><stop offset=".4" stopColor="#ffae18" /><stop offset="1" stopColor="#d98200" /></linearGradient>
      <linearGradient id="tube" x2="0" y2="1"><stop offset="0" stopColor="#ef9a00" /><stop offset=".25" stopColor="#ffd012" /><stop offset=".5" stopColor="#f39c03" /><stop offset=".8" stopColor="#b96e00" /><stop offset="1" stopColor="#704300" /></linearGradient>
    </defs>
    <RobotSide />
    <g transform="matrix(1 0 0 -1 0 734)"><RobotSide /></g>
    <rect x="461.500" y="295.500" width="229" height="143" fill={O} stroke="#8b6425" />
    <path d="M461 295.500H691" stroke="#4c3a1d" />
    <path d="M460.500 295V439" stroke="#8a8a8a" />
    <rect x="473.500" y="307.500" width="205" height="119" fill="none" stroke="#a36a0c" />
    <path d="M473 307.500H679" stroke="#3e301a" />
    <path d="M596 296H605.500L602 299 600.500 302 599 299ZM596 438H605.500L602 435 600.500 432 599 435Z" fill={D} />
    <rect x="658.500" y="313.500" width="16" height="20" fill="none" stroke="#6e4b13" />
    <circle cx="666.500" cy="323" r="2.200" fill="#d99418" stroke={D} />
    <rect x="466.500" y="353.500" width="18" height="27" fill="none" stroke="#5a3d10" />

    <g strokeLinejoin="round">
      <circle cx="576" cy="367" r="21.500" fill={O} stroke={D} strokeDasharray="6 1" />
      <circle cx="577" cy="367" r="18.500" fill="none" stroke={D} strokeWidth=".9" />
      <path d="M574 347H578L576 351ZM574 388H578L576 384Z" fill={D} stroke={D} />
      <path d="M509 350.500H596V353.500H509ZM509 381.500H596V384.500H509Z" fill="#d88904" stroke="#553b10" strokeWidth=".8" />
      <path d="M543 354H561V381H543Z" fill={O} />
      <path d="M547 354Q552 366 545 381M560 354Q551 367 560 381M555 365 559 367 555 369Z" fill="none" stroke={D} strokeWidth=".9" />
      <path d="M560.500 354H566V381H560.500Z" fill="#efa115" stroke={D} />
      <path d="M566.500 355.500H586Q592 359 593 367T586 379.500H566.500Z" fill="url(#tube)" stroke={D} />
      <path d="M566 363.500H592M566 371.500H592" stroke="#5a3d10" strokeWidth=".8" />
      <path d="M593 367 597 364V370Z" fill={D} />
      <path d="M505 355H533Q546 358 546 367T533 380H505Z" fill="url(#tube)" />
      <path d="M533 355Q546 358 546 367T533 380M533.500 355V380M505 366.500H545M505 355H533" fill="none" stroke="#6a430a" strokeWidth=".8" />
      <path d="M510 350.500H490Q479 352 479 367T490 384H512Q504 380 504 367T510 350.500Z" fill="url(#tube)" />
      <path d="M488 351Q483 367 488 383M511 351Q503 357 504.500 367T511 384" fill="none" stroke={D} strokeDasharray="6 1" />
    </g>

    <g fill="#242424" stroke="#242424" strokeWidth=".6" strokeLinejoin="round" strokeLinecap="round">
      <path d="M401 357 419 356 422 358V361L404 362 401 361ZM419 357 424 354 427 356 434 361 430 363 421 361Z" />
      <path d="M411 371 420 370 421 373 415 375 418 377 413 378 410 375ZM420 371 432 370 434 374 420 375Z" />
      <path d="M429 354 434 353 437 358 433 360ZM430 372 438 369 447 373 455 374 453 378 446 377 443 381 437 380 433 377Z" />
      <path d="M447 361 456 359 470 362 473 364V371L466 376 457 373 448 371 441 367Z" />
      <path d="M473 363 477 358 479 357V378L474 374ZM470 365H475V371H470Z" />
      <path d="M431 354 442 357 456 360M428 357 443 368M432 360 448 363M437 359 452 362M440 375 464 371M432 372 446 369" fill="none" strokeWidth="1.900" />
      <path d="M405 359.500H416M415 373H422M440 371 450 374M452 366 458 368M433 357 441 359" stroke="#7b7c7e" strokeWidth=".8" />
      <path d="M458 361H462V363H459ZM465 362H469V364H466ZM460 368H464V370H461Z" fill="#444" stroke="#dcdcdc" strokeWidth=".8" />
    </g>

    <path d="M691 366V320L693 312Q695 322 694 334Z" fill="#36a046" stroke="#6cb376" strokeWidth=".6" />
    <path d="M710 366.500 730 364.500Q740 364.500 748 367.500 740 370.500 730 370.500L710 368.500Z" fill="#c9282b" />
    <path d="M692 367.500 714 366V369Z" fill="#e89a9a" />
    <circle cx="691" cy="367.500" r="2.500" fill="#1141cf" />
    <g fontSize="13" fontFamily="Open Sans">
      <text x="696" y="310" fill="#2f8f35">YC</text>
      <text x="692" y="367" fill="#1b45ea">ZC</text>
      <text x="734" y="362" fill="#c62d32">XC</text>
    </g>
  </Scene>
);

const AxisTriad = () => (
  <Triad width="60" height="60" viewBox="168 563 60 60" aria-label="axes">
    <path d="M178.500 591.500H198.500V611H178.500Z" fill="#cdced0" stroke="#b0b0b2" />
    <path d="M177.500 611V585" stroke="#2f9438" strokeWidth="1.300" />
    <path d="M175 588 177.500 578 180 588Z" fill="#23882e" />
    <path d="M178 611.500H204" stroke="#cc3535" strokeWidth="1.300" />
    <path d="M202 609 211 611.500 202 614Z" fill="#cc2424" />
    <circle cx="177.500" cy="611.500" r="3.500" fill="#1541d1" />
    <path d="M175.500 610H179L176 613H180" fill="none" stroke="#c1d1ff" strokeWidth=".8" />
    <g fontSize="12" fontFamily="Open Sans">
      <text x="174" y="577" fill="#2d8b33">Y</text>
      <text x="213" y="616" fill="#cb2d2d">X</text>
    </g>
  </Triad>
);

const Chevron = ({ d }: { d: string }) => (
  <svg width="9" height="9" viewBox="0 0 9 9"><path d={d} fill="none" stroke="#505050" strokeWidth="2" /></svg>
);

export default function App() {
  return (
    <Shell>
      <Global />
      <ToolbarRow>
        <Group>
          <Tool name="notes" clipped /><Sep /><Tool name="tag" /><Sep $tight />
          {tools("blockCheck sketchCheck boxCheck")}<Sep /><Tool name="abc" /><Drop low />
        </Group>
        <Group><Grip />{tools("slot groove feature")}<Drop low /></Group>
        <Group><Grip />{tools("spring extSpring spool")}<Sep /><Tool name="springCut" /><Drop low /></Group>
        <Group $gapBefore><Grip />{tools("triangle tableTri folderPts folderCircles terminal brush")}<Sep $tight /><Tool name="find" /><Drop low /></Group>
        <Group><Grip />{tools("lockCubes cubes")}<Drop low /></Group>
        <Group><Grip />{tools("line arc spline offset surface1 project surface2 surface3")}</Group>
      </ToolbarRow>
      <OptionsRow>
        <SelectBox $short><Select $short aria-label="filter"><option></option></Select><Caret /></SelectBox>
        <SelectBox><Select aria-label="scope"><option>仅在工作部件内</option></Select><Caret /></SelectBox>
        <Snap name="asm" /><Sep $tight /><Snap name="undoFilter" /><Snap name="filter" /><Drop />
        <Snap name="rotate" /><Snap name="tree" /><Sep $tight />
        <Snap name="marquee" /><Drop /><Sep $tight />
        <Snap name="solid" /><Snap name="blueCube" /><Sep />
        <Snap name="snapAll" on /><Snap name="end" on /><Snap name="mid" on /><Snap name="ctrl" /><Snap name="pole" on />
        <Snap name="cross" /><Snap name="center" on /><Snap name="quad" /><Snap name="point" on /><Snap name="onCurve" on />
        <Snap name="face" /><Sep $tight /><Snap name="grid" />
      </OptionsRow>
      <Main>
        <Navigator>
          <NavTitle><span>器</span><MaxButton aria-label="maximize" /></NavTitle>
          <TreeFrame>
            <ColumnHeader><span>部件名</span><svg width="10" height="6"><path d="M0 6 5 0 10 6Z" fill="#111" /></svg></ColumnHeader>
            <TreeBody>
              <TreeList>
                {rows.map(([name, kind]) => (
                  <TreeItem key={name} $kind={kind}>
                    {kind === "part" && <PartIcon />}
                    {kind === "assembly" && <AssemblyIcon />}
                    <span>{name}</span>
                  </TreeItem>
                ))}
              </TreeList>
              <VScroll>
                <ScrollArrow aria-label="up"><Chevron d="M1 6 4.500 2.500 8 6" /></ScrollArrow>
                <Thumb />
                <ScrollArrow aria-label="down"><Chevron d="M1 3 4.500 6.500 8 3" /></ScrollArrow>
              </VScroll>
            </TreeBody>
            <HScroll><ScrollArrow aria-label="right"><Chevron d="M3 1 6.500 4.500 3 8" /></ScrollArrow></HScroll>
          </TreeFrame>
          <Splitter />
        </Navigator>
        <Viewport><Robot /><AxisTriad /></Viewport>
      </Main>
      <BottomRow>
        <BottomGroup>
          <Grip /><Tool name="sketchNew" />
          <ToolButton $wide disabled><svg width="24" height="24" viewBox="0 0 24 24">{art.flag}</svg>完成草图</ToolButton>
          {tools("profile line arc circle fillet chamfer rect spline plus offsetGray")}<Drop /><Sep />
          {tools("trim extend corner")}<Sep /><Tool name="autoDim" /><Drop /><Sep />
          {tools("constraint symmetric showCons")}<Drop /><Sep />
          {tools("refSketch editFeat rollFeat")}<Drop low />
        </BottomGroup>
      </BottomRow>
    </Shell>
  );
}
